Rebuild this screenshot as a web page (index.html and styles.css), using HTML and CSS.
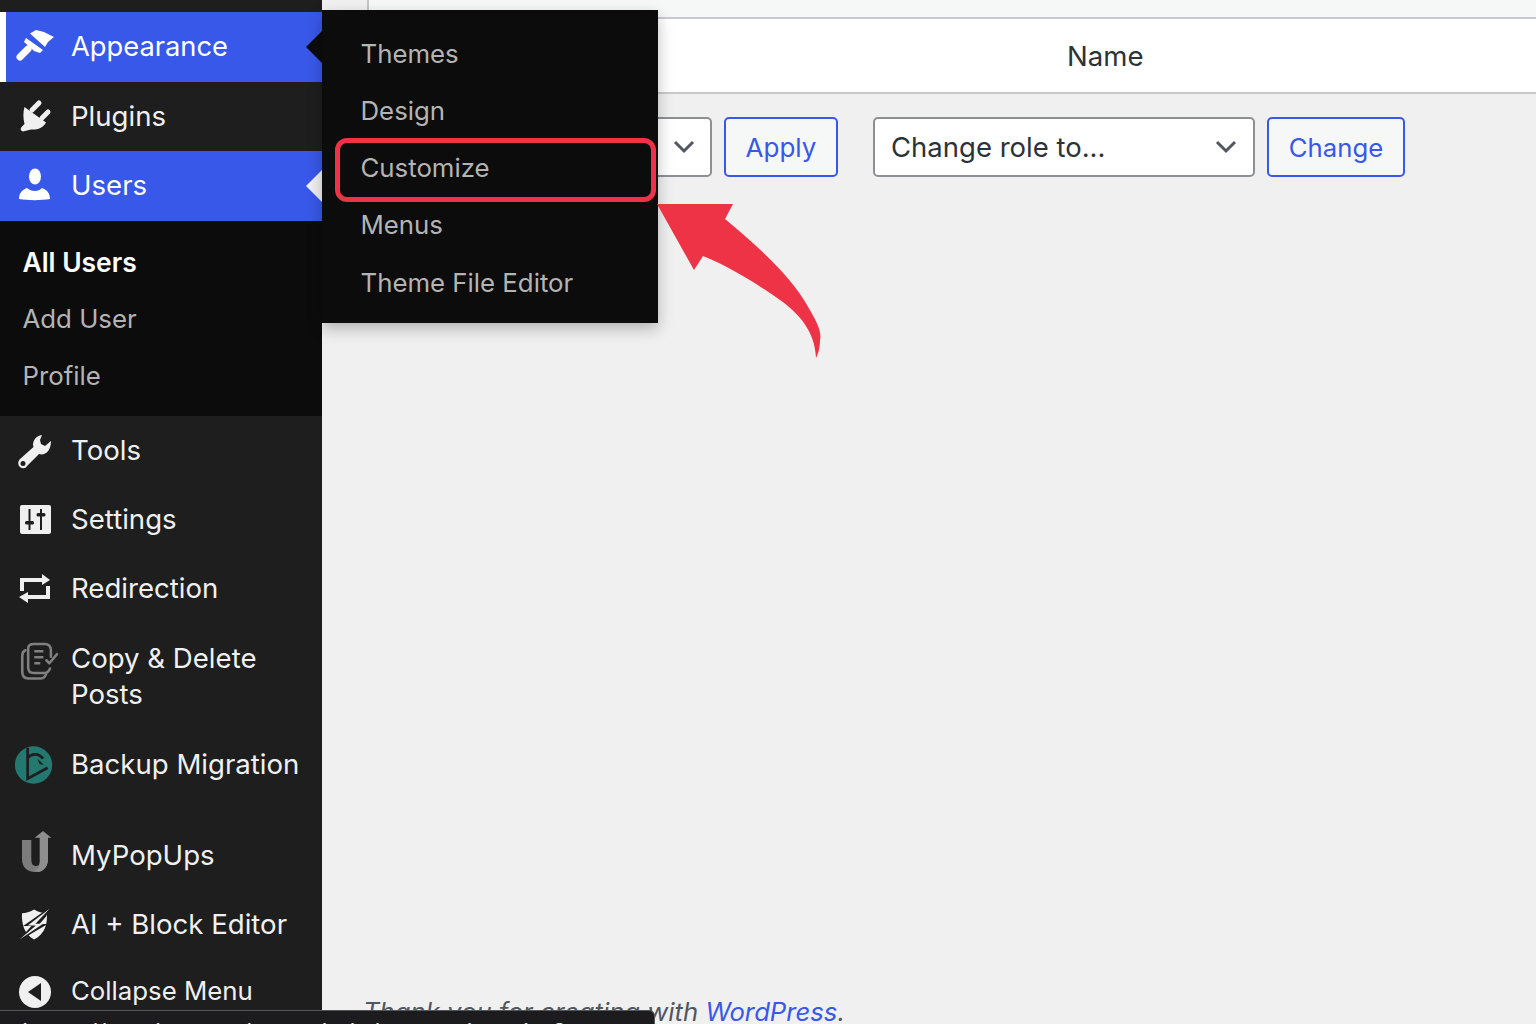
FILE: index.html
```html
<!DOCTYPE html>
<html lang="en">
<head>
<meta charset="utf-8">
<title>Users</title>
<link rel="stylesheet" href="styles.css">
</head>
<body>
<div class="page">
  <aside class="sidebar">
    <div class="top-strip"></div>
    <div class="item current first">
      <span class="icon"><svg viewBox="0 0 40 40" width="40" height="40"><g fill="#fff"><path d="M15 6.500L21 3l8 2 10 5-6 5-3 5z"/><path d="M11 11l17 12-3 3-6-2-2-2-8-7z"/></g><path d="M5 30L13 22" stroke="#fff" stroke-width="7" stroke-linecap="round"/></svg></span>
      <span class="label">Appearance</span>
      <span class="notch dark"></span>
    </div>
    <div class="item">
      <span class="icon"><svg viewBox="0 0 40 40" width="40" height="40"><path fill="#f0f0f1" d="M9.500 10L31 25.500C28 31 22 33 16 32.500L8 34.500C5.500 34 5 32 6.500 30L9.500 27C8 21 8 15 9.500 10z"/><path d="M17 13L24 6M27 21L33 15" stroke="#f0f0f1" stroke-width="5" stroke-linecap="round"/></svg></span>
      <span class="label">Plugins</span>
    </div>
    <div class="item current">
      <span class="icon"><svg viewBox="0 0 40 40" width="40" height="40"><g fill="#fff"><ellipse cx="20" cy="10.500" rx="6" ry="8"/><path d="M4 33c0-6 3-9 8-11 2 2 5 3 8 3s5-1 7-3c5 2 8 5 8 11-9 1.500-22 1.500-31 0z"/></g></svg></span>
      <span class="label">Users</span>
      <span class="notch light"></span>
    </div>
    <ul class="submenu">
      <li class="sub-strong">All Users</li>
      <li>Add User</li>
      <li>Profile</li>
    </ul>
    <div class="item">
      <span class="icon"><svg viewBox="0 0 40 40" width="40" height="40"><path fill="#f0f0f1" fill-rule="evenodd" d="M27 4C21 5 18 9 18 14L18.500 16 5 28C2 31 3 36 7 37 9 37.500 11 37 12 35L24 23C30 25 36 20 36 10L30 15 26 13 25 9zM8 30a2.500 2.500 0 1 1 0 5 2.500 2.500 0 0 1 0-5z"/></svg></span>
      <span class="label">Tools</span>
    </div>
    <div class="item">
      <span class="icon"><svg viewBox="0 0 40 40" width="40" height="40"><rect x="5" y="5" width="31" height="29" rx="2" fill="#f0f0f1"/><g fill="#1e1e1e"><rect x="13.500" y="9" width="2" height="21"/><rect x="25" y="9" width="2" height="21"/><rect x="10" y="21" width="9" height="3.500" rx="1.500"/><rect x="21.500" y="13" width="9" height="3.500" rx="1.500"/></g></svg></span>
      <span class="label">Settings</span>
    </div>
    <div class="item">
      <span class="icon"><svg viewBox="0 0 40 40" width="40" height="40"><g fill="#f0f0f1"><path d="M5 9h22V5l8 6-8 5v-3H9v9H5z"/><path d="M35 30H13v4l-9-6 9-5v3h18v-9h4z"/></g></svg></span>
      <span class="label">Redirection</span>
    </div>
    <div class="item tall">
      <span class="icon"><svg viewBox="0 0 44 44" width="44" height="44"><g fill="none" stroke="#808080" stroke-width="2.800" stroke-linecap="round" stroke-linejoin="round"><path d="M6 8C3.500 9 2.500 11 2.500 14V32C2.500 37 5 39 9 39H23C26 39 28 37 29 33"/><path d="M34 15V8C34 3 31 1 27 1H15C11 1 9 3 9 6V27C9 31 11 33 15 33H27C30 33 32 31 33 28"/><path d="M29 19L32.300 22.300 40.700 12.300"/></g><path d="M15.700 9H25.700M15.700 15.700H25.700M15.700 22.300H22.300" stroke="#808080" stroke-width="2.800" fill="none"/></svg></span>
      <span class="label">Copy &amp; Delete<br>Posts</span>
    </div>
    <div class="item backup">
      <span class="icon"><svg viewBox="0 0 44 44" width="44" height="44"><circle cx="21.500" cy="22" r="20.500" fill="#23796f"/><g fill="none" stroke="#1e1e1e" stroke-width="3"><path d="M15 3V37L37 25"/><path d="M15 14C20 9 27 9 32 15"/></g><path fill="#1e1e1e" d="M26 15L33 22 28 21z"/></svg></span>
      <span class="label">Backup Migration</span>
    </div>
    <div class="item mypopups">
      <span class="icon"><svg viewBox="0 0 40 50" width="40" height="50"><path fill="#7c7c7c" d="M7 9H16.300V28C16.300 33 18 35 21 35 23 35 24.700 34 24.700 31L33 28C33 37 27 41 20 41 12 41 7 36 7 28z"/><path fill="#8e8e8e" d="M24.700 31V6.700H19.700L28 0 36.300 6.700H33V28C33 35 29 40 24 41 21 41 20 40 19 39 24 39 24.700 35 24.700 31z"/></svg></span>
      <span class="label">MyPopUps</span>
    </div>
    <div class="item">
      <span class="icon"><svg viewBox="0 0 44 44" width="44" height="44"><path fill="#f0f0f1" d="M21 5C26 8 30 9 35 9 36 20 33 32 21 38 10 32 7 20 7.700 9 12 9 16 8 21 5z"/><path fill="#1e1e1e" d="M39 2L9 23H18L2 41 36 21H27L34 13z"/><path fill="#f0f0f1" d="M38 4L14 22.500H23L5 38 31 20.500H22.500z"/></svg></span>
      <span class="label">AI + Block Editor</span>
    </div>
    <div class="item collapse">
      <span class="icon"><svg viewBox="0 0 40 40" width="40" height="40"><circle cx="20" cy="20" r="16" fill="#f0f0f1"/><path fill="#1e1e1e" d="M26 11v18L13 20z"/></svg></span>
      <span class="label">Collapse Menu</span>
    </div>
  </aside>

  <main class="main">
    <div class="strip"></div>
    <div class="table-head">Name</div>
    <div class="actions">
      <div class="select small-select"><span class="chev"><svg viewBox="0 0 24 24" width="24" height="24"><path d="M3 7l9 9 9-9" fill="none" stroke="#50575e" stroke-width="3"/></svg></span></div>
      <button class="btn apply">Apply</button>
      <div class="select role-select"><span>Change role to...</span><span class="chev"><svg viewBox="0 0 24 24" width="24" height="24"><path d="M3 7l9 9 9-9" fill="none" stroke="#50575e" stroke-width="3"/></svg></span></div>
      <button class="btn change">Change</button>
    </div>
    <footer class="footer"><em>Thank you for creating with <a href="#">WordPress</a>.</em></footer>
  </main>

  <ul class="flyout">
    <li>Themes</li>
    <li>Design</li>
    <li>Customize</li>
    <li>Menus</li>
    <li>Theme File Editor</li>
  </ul>
  <div class="highlight"></div>
  <svg class="arrow" viewBox="0 0 170 165" width="170" height="165"><path fill="#ee3346" d="M0 4H76L68 19C100 45 135 78 150 105 160 122 165 132 163 140 163 148 161 154 159 158 158 130 140 112 123 100 100 84 75 68 46 56L37 70z"/></svg>
  <div class="status">https://mysite.com/wp-admin/customize.php?return=%2Fwp-admin</div>
</div>
</body>
</html>
```

FILE: styles.css
```css
* { box-sizing: border-box; }
html, body { margin: 0; padding: 0; height: 1024px; overflow: hidden; }
body { font-family: Inter, "Noto Sans", sans-serif; background: #f0f0f1; }
ul { list-style: none; margin: 0; padding: 0; }
.page { position: relative; display: flex; width: 1536px; height: 1024px; overflow: hidden; }

.sidebar { width: 322px; flex: none; background: #1e1e1e; color: #f0f0f1; height: 1024px; overflow: hidden; }
.top-strip { height: 12px; }
.item { position: relative; display: flex; align-items: center; height: 69px; padding-left: 71px; font-size: 27.600px; line-height: 36px; }
.label { margin-top: -2px; }
.item .icon { position: absolute; left: 15px; top: 50%; transform: translateY(-50%); width: 40px; height: 40px; display: flex; align-items: center; justify-content: center; }
.item.current { background: #3858e9; color: #fff; height: 70px; }
.item.first { border-left: 6px solid #fff; padding-left: 65px; font-size: 27.300px; }
.item.first .label { margin-top: 0; }
.item.first .icon { left: 9px; }
.notch { position: absolute; right: 0; top: 50%; margin-top: -16px; border: 16px solid transparent; border-left-width: 0; }
.notch.dark { border-right-color: #0c0c0c; }
.notch.light { border-right-color: #f0f0f1; }

.submenu { background: #0c0c0c; height: 195px; padding-top: 13px; }
.submenu li { height: 56.800px; line-height: 56.800px; padding-left: 22.500px; font-size: 25.800px; color: #b4b4b4; }
.submenu .sub-strong { color: #fff; font-weight: 600; font-size: 26.400px; }

.item.tall { height: 107px; padding-top: 1px; }
.item.tall .icon { top: 20px; transform: none; left: 20px; }
.item.backup { height: 69px; margin-bottom: 22px; }
.item.backup .icon { left: 14px; }
.item.collapse { height: 64px; font-size: 25.800px; }
.item.collapse .label { margin-top: 0; }
.item.collapse .icon { top: 33px; }

.main { flex: 1; min-width: 0; height: 1024px; display: flex; flex-direction: column; position: relative; }
.strip { height: 17px; background: #f6f7f7; margin-left: 45px; border-left: 2px solid #c3c4c7; flex: none; }
.table-head { height: 77px; flex: none; margin-left: 45px; background: #fff; border-top: 2px solid #c9cacd; border-bottom: 2px solid #c9cacd; display: flex; align-items: center; padding-left: 700px; padding-top: 1px; font-size: 27.600px; color: #2c3338; }
.actions { display: flex; align-items: center; margin-top: 23px; height: 60px; flex: none; padding-left: 322px; }
.select { background: #fff; border: 2px solid #8c8f94; border-radius: 5px; height: 60px; display: flex; align-items: center; justify-content: space-between; font-size: 27.500px; color: #2c3338; flex: none; }
.small-select { width: 68px; justify-content: flex-end; padding-right: 14px; }
.role-select { width: 382px; margin-left: 35px; padding: 0 15px 0 16px; }
.chev { display: flex; }
.btn { font: inherit; font-size: 26px; color: #3858e9; background: #f6f7f7; border: 2px solid #3858e9; border-radius: 5px; height: 60px; padding: 0; flex: none; }
.apply { width: 114px; margin-left: 12px; }
.change { width: 138px; margin-left: 12px; font-size: 25.700px; }
.footer { margin-top: auto; height: 30px; padding-left: 41px; font-size: 25.700px; line-height: 36px; color: #50575e; flex: none; }
.footer a { color: #3858e9; text-decoration: underline; text-underline-offset: 3px; text-decoration-thickness: 1px; }

.flyout { position: absolute; left: 322px; top: 10px; width: 336px; height: 313px; background: #0c0c0c; padding-top: 15px; box-shadow: 0 6px 14px rgba(0,0,0,.25); }
.flyout li { height: 57.150px; line-height: 57.150px; padding-left: 38.500px; font-size: 25.800px; color: #b4b4b4; }
.highlight { position: absolute; left: 335px; top: 138px; width: 321px; height: 64px; border: 5px solid #ee3346; border-radius: 12px; }
.arrow { position: absolute; left: 657px; top: 200px; }
.status { position: absolute; left: 0; top: 1010px; width: 655px; height: 20px; background: #1c1c1f; border: 1px solid #55565a; border-bottom: none; border-left: none; border-radius: 0 6px 0 0; color: #e4e4e4; font-size: 25px; line-height: 44px; padding-left: 22px; white-space: nowrap; overflow: hidden; }
```
